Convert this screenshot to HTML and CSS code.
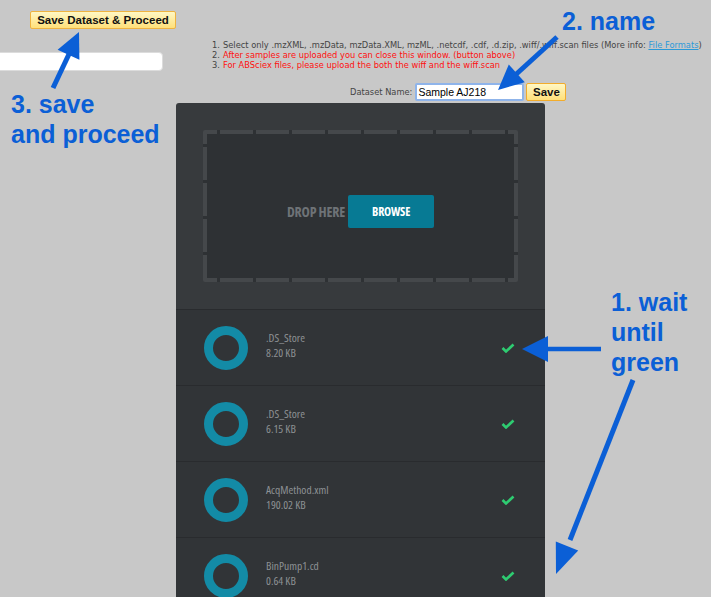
FILE: index.html
```html
<!DOCTYPE html>
<html>
<head>
<meta charset="utf-8">
<link rel="stylesheet" href="styles.css">
</head>
<body>
<div class="page">
  <header class="header">
    <div class="left-col">
      <button class="btn-yellow btn-proceed">Save Dataset &amp; Proceed</button>
      <input class="search" type="text" value="">
    </div>
    <div class="right-col">
      <ol class="rules">
        <li><span class="num">1.</span><span class="txt">Select only .mzXML, .mzData, mzData.XML, mzML, .netcdf, .cdf, .d.zip, .wiff/.wiff.scan files (More info: <a href="#">File Formats</a>)</span></li>
        <li class="red"><span class="num">2.</span><span class="txt">After samples are uploaded you can close this window. (button above)</span></li>
        <li class="red"><span class="num">3.</span><span class="txt">For ABSciex files, please upload the both the wiff and the wiff.scan</span></li>
      </ol>
      <div class="name-row">
        <label class="name-label">Dataset Name:</label>
        <input class="name-input" type="text" value="Sample AJ218">
        <button class="btn-yellow btn-save">Save</button>
      </div>
    </div>
  </header>

  <section class="uploader">
    <div class="drop-area">
      <div class="dropzone">
        <span class="drop-label">DROP HERE</span>
        <button class="browse">BROWSE</button>
      </div>
    </div>
    <ul class="files">
      <li class="file">
        <span class="ring"></span>
        <div class="meta"><div class="fname">.DS_Store</div><div class="fsize">8.20 KB</div></div>
        <svg class="check" width="14" height="10" viewBox="0 0 14 10"><polyline points="1.5,5 5,8.5 12.5,1.5" fill="none" stroke="#2ecc71" stroke-width="2.6"/></svg>
      </li>
      <li class="file">
        <span class="ring"></span>
        <div class="meta"><div class="fname">.DS_Store</div><div class="fsize">6.15 KB</div></div>
        <svg class="check" width="14" height="10" viewBox="0 0 14 10"><polyline points="1.5,5 5,8.5 12.5,1.5" fill="none" stroke="#2ecc71" stroke-width="2.6"/></svg>
      </li>
      <li class="file">
        <span class="ring"></span>
        <div class="meta"><div class="fname">AcqMethod.xml</div><div class="fsize">190.02 KB</div></div>
        <svg class="check" width="14" height="10" viewBox="0 0 14 10"><polyline points="1.5,5 5,8.5 12.5,1.5" fill="none" stroke="#2ecc71" stroke-width="2.6"/></svg>
      </li>
      <li class="file">
        <span class="ring"></span>
        <div class="meta"><div class="fname">BinPump1.cd</div><div class="fsize">0.64 KB</div></div>
        <svg class="check" width="14" height="10" viewBox="0 0 14 10"><polyline points="1.5,5 5,8.5 12.5,1.5" fill="none" stroke="#2ecc71" stroke-width="2.6"/></svg>
      </li>
    </ul>
  </section>

  <div class="notes">
    <div class="note note-save">3. save<br>and proceed</div>
    <div class="note note-name">2. name</div>
    <div class="note note-wait">1. wait<br>until<br>green</div>
    <svg class="arrows" width="711" height="597" viewBox="0 0 711 597">
      <g fill="#0b5fd6" stroke="#0b5fd6">
        <line x1="53" y1="88" x2="70" y2="52" stroke-width="5"/>
        <polygon points="79,32 57.6,49.7 79.4,59.7" stroke="none"/>
        <line x1="557" y1="37" x2="512" y2="78" stroke-width="5"/>
        <polygon points="498,90 508.8,64.4 524.8,82.2" stroke="none"/>
        <line x1="601" y1="349" x2="544" y2="349" stroke-width="4.5"/>
        <polygon points="522,349 548,336 548,362" stroke="none"/>
        <line x1="633" y1="380" x2="570" y2="540" stroke-width="5"/>
        <polygon points="556,574 555.8,541.6 578.2,550.4" stroke="none"/>
      </g>
    </svg>
  </div>
</div>
</body>
</html>
```
FILE: styles.css
```css
html, body {
  margin: 0;
  padding: 0;
  height: 597px;
  overflow: hidden;
}
body {
  background: #c8c8c8;
  font-family: "Liberation Sans", Arial, sans-serif;
}
.page {
  position: relative;
  width: 711px;
  height: 597px;
  overflow: hidden;
}

/* header */
.header {
  display: grid;
  grid-template-columns: 200px 1fr;
  height: 101px;
}
.left-col {
  display: flex;
  flex-direction: column;
  align-items: flex-start;
}
.btn-yellow {
  font-family: "Liberation Sans", Arial, sans-serif;
  font-weight: bold;
  color: #111;
  border: 1px solid #efb340;
  border-radius: 2px;
  background: linear-gradient(#fff7c4, #ffe07a);
  padding: 0;
  margin: 0;
}
.btn-proceed {
  margin: 11px 0 0 30px;
  width: 146px;
  height: 18px;
  font-size: 11.5px;
  line-height: 16px;
}
.search {
  margin: 23px 0 0 -10px;
  width: 173px;
  height: 19px;
  box-sizing: border-box;
  border: 1px solid #dcdcdc;
  border-radius: 4px;
  background: #fff;
  padding: 0;
}

.right-col {
  display: flex;
  flex-direction: column;
}
.rules {
  list-style: none;
  margin: 40px 0 0 12px;
  padding: 0;
  font-family: "DejaVu Sans", Verdana, sans-serif;
  font-size: 8.3px;
  line-height: 10px;
  color: #444;
  white-space: nowrap;
}
.rules li {
  display: flex;
}
.rules .num {
  width: 11px;
  color: #444;
}
.rules .red .txt {
  color: #ff1010;
}
.rules a {
  color: #2c9ad8;
  text-decoration: underline;
}
.name-row {
  display: flex;
  align-items: center;
  margin: 13px 0 0 150px;
  height: 18px;
}
.name-label {
  font-family: "DejaVu Sans", Verdana, sans-serif;
  font-size: 8.3px;
  color: #444;
  margin-right: 3px;
}
.name-input {
  width: 109px;
  height: 18px;
  box-sizing: border-box;
  border: 2px solid #8fb4ea;
  border-radius: 2px;
  background: #fff;
  padding: 0 0 0 1px;
  font-family: "Liberation Sans", Arial, sans-serif;
  font-size: 10.5px;
  color: #000;
  outline: none;
}
.btn-save {
  margin-left: 2px;
  width: 40px;
  height: 18px;
  font-size: 11.5px;
  line-height: 16px;
  border-color: #f2ac2c;
}

/* uploader panel */
.uploader {
  margin: 2px 0 0 176px;
  width: 369px;
  background: #373a3d;
  border-radius: 3px 3px 0 0;
}
.drop-area {
  padding: 27px 27px 27px 27px;
}
.dropzone {
  --dash: #45484b;
  height: 152px;
  box-sizing: border-box;
  padding-top: 11px;
  display: flex;
  align-items: center;
  justify-content: center;
  gap: 3px;
  background:
    repeating-linear-gradient(90deg, var(--dash) 0 14px, transparent 14px 17px, var(--dash) 17px 36px) 0 0 / 100% 4px no-repeat,
    repeating-linear-gradient(90deg, var(--dash) 0 14px, transparent 14px 17px, var(--dash) 17px 36px) 0 100% / 100% 4px no-repeat,
    repeating-linear-gradient(180deg, var(--dash) 0 14px, transparent 14px 17px, var(--dash) 17px 36px) 0 0 / 4px 100% no-repeat,
    repeating-linear-gradient(180deg, var(--dash) 0 14px, transparent 14px 17px, var(--dash) 17px 36px) 100% 0 / 4px 100% no-repeat,
    #2e3134;
  border-radius: 2px;
}
.drop-label {
  font-family: "Open Sans", sans-serif;
  font-stretch: 75%;
  font-weight: bold;
  font-size: 14px;
  letter-spacing: -0.2px;
  color: #6e7377;
}
.browse {
  width: 86px;
  height: 33px;
  border: none;
  border-radius: 2px;
  background: #077a94;
  color: #fff;
  font-family: "Open Sans", sans-serif;
  font-stretch: 75%;
  font-weight: bold;
  font-size: 12px;
  letter-spacing: -0.2px;
  padding: 0;
}

.files {
  list-style: none;
  margin: 0;
  padding: 0;
}
.file {
  display: flex;
  align-items: center;
  height: 76px;
  box-sizing: border-box;
  border-top: 1px solid #292b2e;
  background: #313437;
  padding: 0 30px 0 28px;
}
.ring {
  width: 44px;
  height: 44px;
  box-sizing: border-box;
  border: 9px solid #138ba6;
  border-radius: 50%;
  flex: none;
}
.meta {
  flex: 1;
  margin-left: 18px;
  margin-bottom: 6px;
  font-family: "Open Sans", sans-serif;
  font-stretch: 75%;
  font-size: 11.5px;
  line-height: 15px;
  color: #8d9194;
}
.check {
  flex: none;
}

/* annotations overlay */
.notes {
  position: absolute;
  inset: 0;
  pointer-events: none;
}
.note {
  position: absolute;
  font-family: "Liberation Sans", Arial, sans-serif;
  font-weight: bold;
  font-size: 25px;
  line-height: 30px;
  color: #0b5fd6;
  white-space: nowrap;
}
.note-save { left: 11px; top: 89px; }
.note-name { left: 562px; top: 6px; }
.note-wait { left: 611px; top: 287px; }
.arrows {
  position: absolute;
  left: 0;
  top: 0;
}
```
